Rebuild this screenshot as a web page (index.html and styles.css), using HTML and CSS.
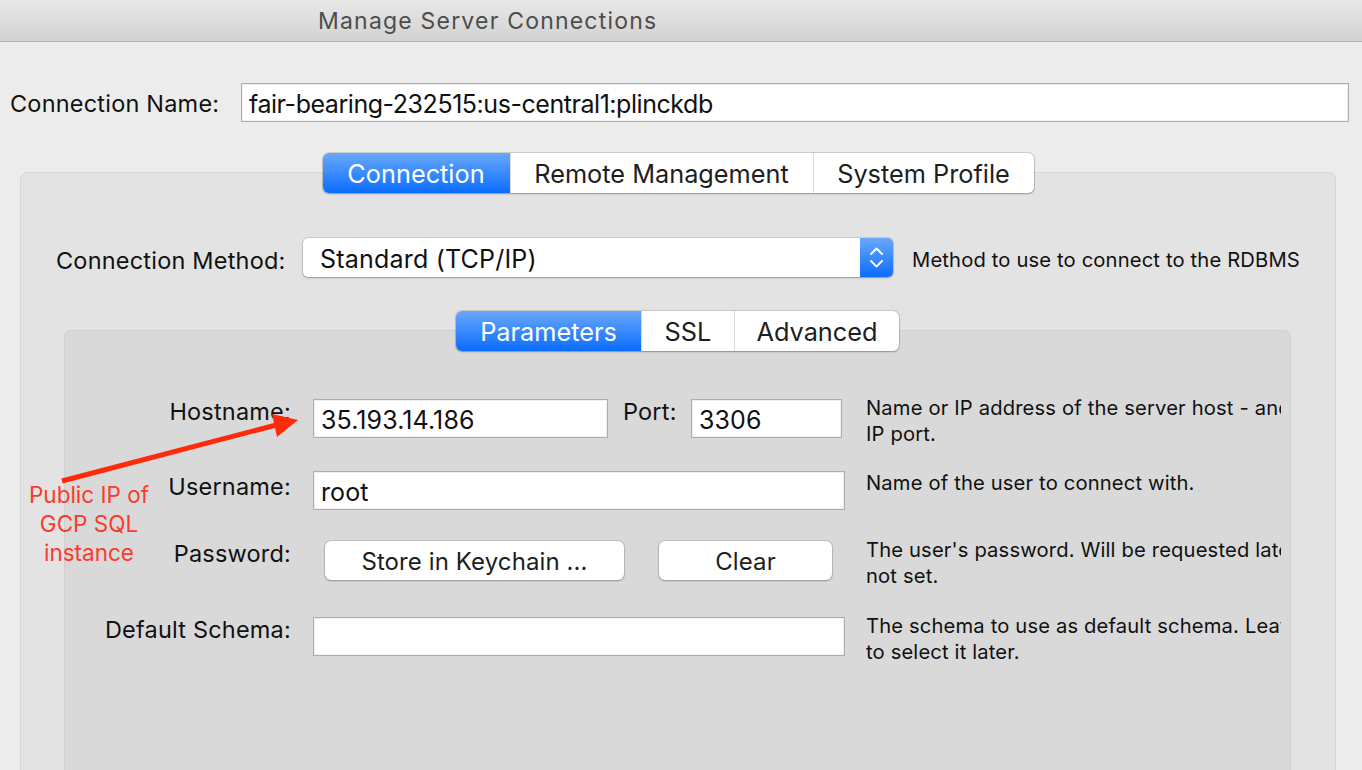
FILE: index.html
```html
<!DOCTYPE html>
<html lang="en">
<head>
<meta charset="utf-8">
<title>Manage Server Connections</title>
<link rel="stylesheet" href="styles.css">
</head>
<body>
<div class="window">
  <header class="titlebar"><span class="title">Manage Server Connections</span></header>

  <div class="name-row">
    <label class="name-label">Connection Name:</label>
    <div class="field name-field">fair-bearing-232515:us-central1:plinckdb</div>
  </div>

  <section class="panel outer">
    <div class="segmented main-tabs">
      <div class="seg active">Connection</div>
      <div class="seg">Remote Management</div>
      <div class="seg">System Profile</div>
    </div>

    <div class="method-row">
      <label class="method-label">Connection Method:</label>
      <div class="select">
        <span class="select-text">Standard (TCP/IP)</span>
        <span class="stepper">
          <svg width="33" height="39" viewBox="0 0 33 39">
            <path d="M11 16 L16.5 10.5 L22 16" fill="none" stroke="#fff" stroke-width="2" stroke-linecap="round" stroke-linejoin="round"/>
            <path d="M11 23 L16.5 28.5 L22 23" fill="none" stroke="#fff" stroke-width="2" stroke-linecap="round" stroke-linejoin="round"/>
          </svg>
        </span>
      </div>
      <span class="method-desc">Method to use to connect to the RDBMS</span>
    </div>

    <section class="panel inner">
      <div class="segmented sub-tabs">
        <div class="seg active">Parameters</div>
        <div class="seg">SSL</div>
        <div class="seg">Advanced</div>
      </div>

      <div class="form">
        <label class="flabel l-host">Hostname:</label>
        <div class="fcell host-cell">
          <div class="field host">35.193.14.186</div>
          <label class="port-label">Port:</label>
          <div class="field port">3306</div>
        </div>
        <div class="desc d-host">Name or IP address of the server host - and TCP/<br>IP port.</div>

        <label class="flabel l-user">Username:</label>
        <div class="fcell"><div class="field wide">root</div></div>
        <div class="desc d-user">Name of the user to connect with.</div>

        <label class="flabel l-pass">Password:</label>
        <div class="fcell btn-cell">
          <button class="btn keychain">Store in Keychain ...</button>
          <button class="btn clear">Clear</button>
        </div>
        <div class="desc d-pass">The user's password. Will be requested later if it's<br>not set.</div>

        <label class="flabel l-schema">Default Schema:</label>
        <div class="fcell"><div class="field wide"></div></div>
        <div class="desc d-schema">The schema to use as default schema. Leave blank<br>to select it later.</div>
      </div>
    </section>
  </section>

  <div class="annotation">Public IP of<br>GCP SQL<br>instance</div>
  <svg class="arrow" width="1362" height="770" viewBox="0 0 1362 770">
    <line x1="62" y1="481" x2="280" y2="424" stroke="#ff2a0a" stroke-width="5"/>
    <polygon points="298,420 272,414 277,437" fill="#ff2a0a"/>
  </svg>
</div>
</body>
</html>
```

FILE: styles.css
```css
* { box-sizing: border-box; }

html, body {
  margin: 0;
  padding: 0;
  background: #ececec;
  font-family: Inter, "Noto Sans", "Liberation Sans", sans-serif;
  color: #111;
}

.window {
  position: relative;
  width: 1362px;
  height: 770px;
  overflow: hidden;
}

.titlebar {
  height: 42px;
  background: linear-gradient(#e8e8e8, #d2d2d2);
  border-bottom: 1px solid #b3b3b3;
  padding-left: 318px;
  display: flex;
  align-items: center;
}

.title {
  font-size: 23px;
  letter-spacing: 1.2px;
  color: #4d4d4d;
}

.name-row {
  display: flex;
  align-items: center;
  margin-top: 41px;
  padding-left: 10px;
  padding-right: 13px;
}

.name-label {
  width: 231px;
  font-size: 23.5px;
  letter-spacing: 0.2px;
  padding-top: 2px;
}

.field {
  height: 39px;
  background: #fff;
  border: 1px solid #adadad;
  box-shadow: inset 0 0 0 1px #f0f0f0;
  font-size: 25px;
  letter-spacing: 0.1px;
  line-height: 37px;
  padding-left: 7px;
  padding-top: 2px;
  white-space: nowrap;
  overflow: hidden;
}

.name-field {
  flex: 1;
  letter-spacing: -0.45px;
}

.panel {
  border-radius: 7px;
  display: flex;
  flex-direction: column;
  align-items: center;
}

.outer {
  margin: 50px 26px 0 20px;
  height: 700px;
  background: #e3e3e3;
  border: 1px solid #d6d6d6;
}

.segmented {
  position: relative;
  z-index: 1;
  display: flex;
  height: 40px;
  background: #fff;
  border-radius: 6px;
  box-shadow: 0 0 0 1px rgba(0,0,0,0.12), 0 1px 2px rgba(0,0,0,0.25);
  font-size: 25.3px;
  color: #1e1e1e;
}

.main-tabs { margin-top: -20px; }

.seg {
  display: flex;
  align-items: center;
  justify-content: center;
  border-left: 1px solid #dadada;
}

.seg:first-child { border-left: none; border-radius: 6px 0 0 6px; }
.seg:last-child { border-radius: 0 6px 6px 0; }

.seg.active {
  background: linear-gradient(#69a8fb, #0a6dfd);
  color: #fff;
}

.main-tabs .seg:nth-child(1) { width: 187px; }
.main-tabs .seg:nth-child(2) { width: 303px; }
.main-tabs .seg:nth-child(3) { width: 221px; }

.method-row {
  align-self: stretch;
  display: flex;
  align-items: center;
  margin-top: 45px;
  padding-left: 35px;
}

.method-label {
  width: 247px;
  font-size: 23.5px;
  letter-spacing: 0.2px;
  padding-top: 5px;
}

.select {
  width: 590px;
  height: 39px;
  display: flex;
  align-items: center;
  background: #fff;
  border-radius: 5px;
  box-shadow: 0 0 0 1px rgba(0,0,0,0.1), 0 1px 2px rgba(0,0,0,0.25);
  font-size: 25px;
  letter-spacing: 0.2px;
  overflow: hidden;
}

.select-text {
  flex: 1;
  padding-left: 17px;
  padding-top: 2px;
}

.stepper {
  width: 33px;
  height: 39px;
  background: linear-gradient(#6aa8fb, #0a6dfd);
  display: flex;
}

.method-desc {
  margin-left: 19px;
  font-size: 20.2px;
  letter-spacing: 0.15px;
  padding-top: 3px;
}

.inner {
  align-self: stretch;
  margin: 53px 44px 0 43px;
  height: 500px;
  background: #d9d9d9;
  border: 1px solid #cfcfcf;
  align-items: stretch;
}

.sub-tabs {
  margin-top: -20px;
  align-self: center;
}

.sub-tabs .seg:nth-child(1) { width: 185px; }
.sub-tabs .seg:nth-child(2) { width: 93px; }
.sub-tabs .seg:nth-child(3) { width: 165px; }

.form {
  display: grid;
  grid-template-columns: 226px 532px 414px;
  grid-template-rows: 72px 70px 76px auto;
  column-gap: 22px;
  align-items: start;
  margin-top: 48px;
}

.flabel {
  text-align: right;
  font-size: 23.5px;
  letter-spacing: 0.2px;
  line-height: 28px;
  margin-top: -1px;
}

.l-user { margin-top: 2px; }

.fcell {
  display: flex;
  align-items: center;
  height: 39px;
}

.host-cell { width: 529px; }
.host { width: 295px; }
.port { width: 151px; margin-left: auto; }

.port-label {
  font-size: 23.5px;
  letter-spacing: 0.2px;
  margin-left: 15px;
  align-self: flex-start;
  line-height: 28px;
  margin-top: -1px;
}

.wide { width: 532px; }

.btn-cell { padding-left: 12px; }

.btn {
  height: 39px;
  background: #fff;
  border: none;
  border-radius: 6px;
  box-shadow: 0 0 0 1px rgba(0,0,0,0.1), 0 1px 2px rgba(0,0,0,0.25);
  font-family: inherit;
  font-size: 24px;
  letter-spacing: 0.1px;
  color: #1e1e1e;
  padding: 2px 0 0;
}

.keychain { width: 299px; }
.clear { width: 173px; margin-left: 35px; }

.desc {
  font-size: 20.2px;
  letter-spacing: 0.15px;
  line-height: 26px;
  white-space: nowrap;
  overflow: hidden;
  margin-left: -1px;
  margin-top: -4px;
}

.d-user { margin-top: -1px; }

.annotation {
  position: absolute;
  left: 20px;
  top: 480px;
  width: 138px;
  text-align: center;
  font-size: 22.5px;
  line-height: 29px;
  color: #fb3a2e;
}

.arrow {
  position: absolute;
  left: 0;
  top: 0;
  pointer-events: none;
}
```
